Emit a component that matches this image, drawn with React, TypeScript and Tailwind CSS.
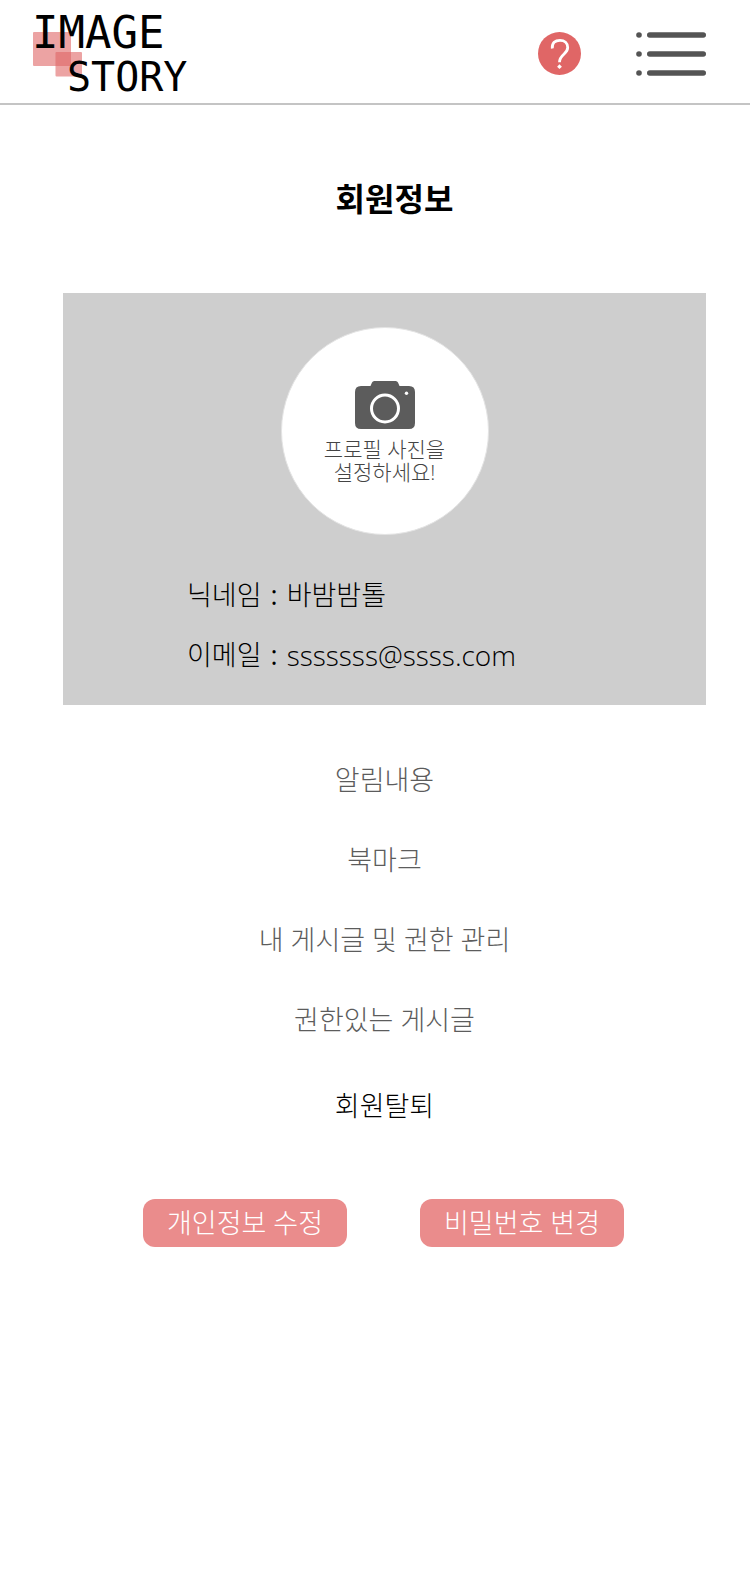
const menuItems = ['알림내용', '북마크', '내 게시글 및 권한 관리', '권한있는 게시글'];

function Logo() {
  return (
    <svg width="160" height="96" viewBox="0 0 160 96" role="img" aria-label="IMAGE STORY">
      <rect x="0" y="26" width="38" height="34" rx="1" fill="#e06666" fillOpacity="0.6" />
      <rect x="22.500" y="46" width="26.500" height="24.500" rx="1" fill="#e06666" fillOpacity="0.6" />
      <g fontFamily="'DejaVu Sans Mono', monospace" fill="#000">
        <text x="-1" y="42" fontSize="44">
          IMAGE
        </text>
        <text x="34" y="85" fontSize="40">
          STORY
        </text>
      </g>
    </svg>
  );
}

function HelpIcon() {
  return (
    <svg width="43" height="43" viewBox="0 0 43 43" aria-hidden="true">
      <circle cx="21.500" cy="21.500" r="21.500" fill="#e06666" />
      <path
        d="M14.300 16.500C13.800 11 17 8.300 22 8.300C26.500 8.300 29.700 11.300 29.700 15.500C29.700 22.500 21.500 22 21.500 30.300"
        fill="none"
        stroke="#fff"
        strokeWidth="2.800"
      />
      <path d="M21.500 32.300L23.900 34.700L21.500 37.100L19.100 34.700Z" fill="#fff" />
    </svg>
  );
}

function ListIcon() {
  return (
    <svg width="70" height="44" viewBox="0 0 70 44" fill="#545454" aria-hidden="true">
      {[3, 22, 41].map((y) => (
        <g key={y}>
          <circle cx="3" cy={y} r="2.800" />
          <rect x="11" y={y - 2.8} width="59" height="5.600" rx="2.800" />
        </g>
      ))}
    </svg>
  );
}

function CameraIcon() {
  return (
    <svg width="60" height="48" viewBox="0 0 60 48" aria-hidden="true">
      <path
        d="M6 5H15.500L17 1.500Q17.700 0 19.300 0H40.700Q42.300 0 43 1.500L44.500 5H54Q60 5 60 11V42Q60 48 54 48H6Q0 48 0 42V11Q0 5 6 5Z"
        fill="#5c5c5c"
      />
      <circle cx="30" cy="27.500" r="13.500" fill="none" stroke="#fff" strokeWidth="3" />
      <circle cx="51.500" cy="12.200" r="1.700" fill="#fff" />
    </svg>
  );
}

export default function App() {
  return (
    <div className="bg-white font-['Open_Sans','Noto_Sans_CJK_KR',sans-serif] text-[27px] font-light text-black">
      <header className="flex h-[105px] items-center border-b-2 border-[#c4c4c4] pt-1 pr-11 pl-[33px]">
        <a href="#home">
          <Logo />
        </a>
        <div className="ml-auto flex items-center gap-[55px]">
          <button type="button" aria-label="도움말">
            <HelpIcon />
          </button>
          <button type="button" aria-label="메뉴">
            <ListIcon />
          </button>
        </div>
      </header>

      <main className="pt-[74px] pr-11 pb-20 pl-[63px]">
        <h1 className="pl-5 text-center text-[32px] leading-10 font-bold">회원정보</h1>

        <section className="mt-[74px] bg-[#cecece] pt-[34px] pb-5">
          <button
            type="button"
            className="mx-auto flex size-52 flex-col items-center rounded-full border border-[#e4e4e4] bg-white pt-[53px] text-[21px] leading-[23px] text-[#444]"
          >
            <CameraIcon />
            <span className="mt-[9px]">
              프로필 사진을
              <br />
              설정하세요!
            </span>
          </button>
          <div className="mt-[30px] pl-[124px] leading-[60px]">
            <p className="flex gap-[9px]">
              <span>닉네임</span>
              <span className="font-normal">:</span>
              <span>바밤밤톨</span>
            </p>
            <p className="flex gap-[9px]">
              <span>이메일</span>
              <span className="font-normal">:</span>
              <span className="text-[28px]">sssssss@ssss.com</span>
            </p>
          </div>
        </section>

        <nav className="mt-[35px] flex flex-col items-center leading-[80px] text-[#5c5c5c]">
          {menuItems.map((item) => (
            <a key={item} href="#menu">
              {item}
            </a>
          ))}
          <a href="#leave" className="mt-1.5 text-black">
            회원탈퇴
          </a>
        </nav>

        <div className="mt-[53px] flex justify-center gap-[73px] pr-0.5 text-white">
          <button type="button" className="h-12 w-[204px] rounded-xl bg-[#ea8c8c] leading-[48px]">
            개인정보 수정
          </button>
          <button type="button" className="h-12 w-[204px] rounded-xl bg-[#ea8c8c] leading-[48px]">
            비밀번호 변경
          </button>
        </div>
      </main>
    </div>
  );
}
